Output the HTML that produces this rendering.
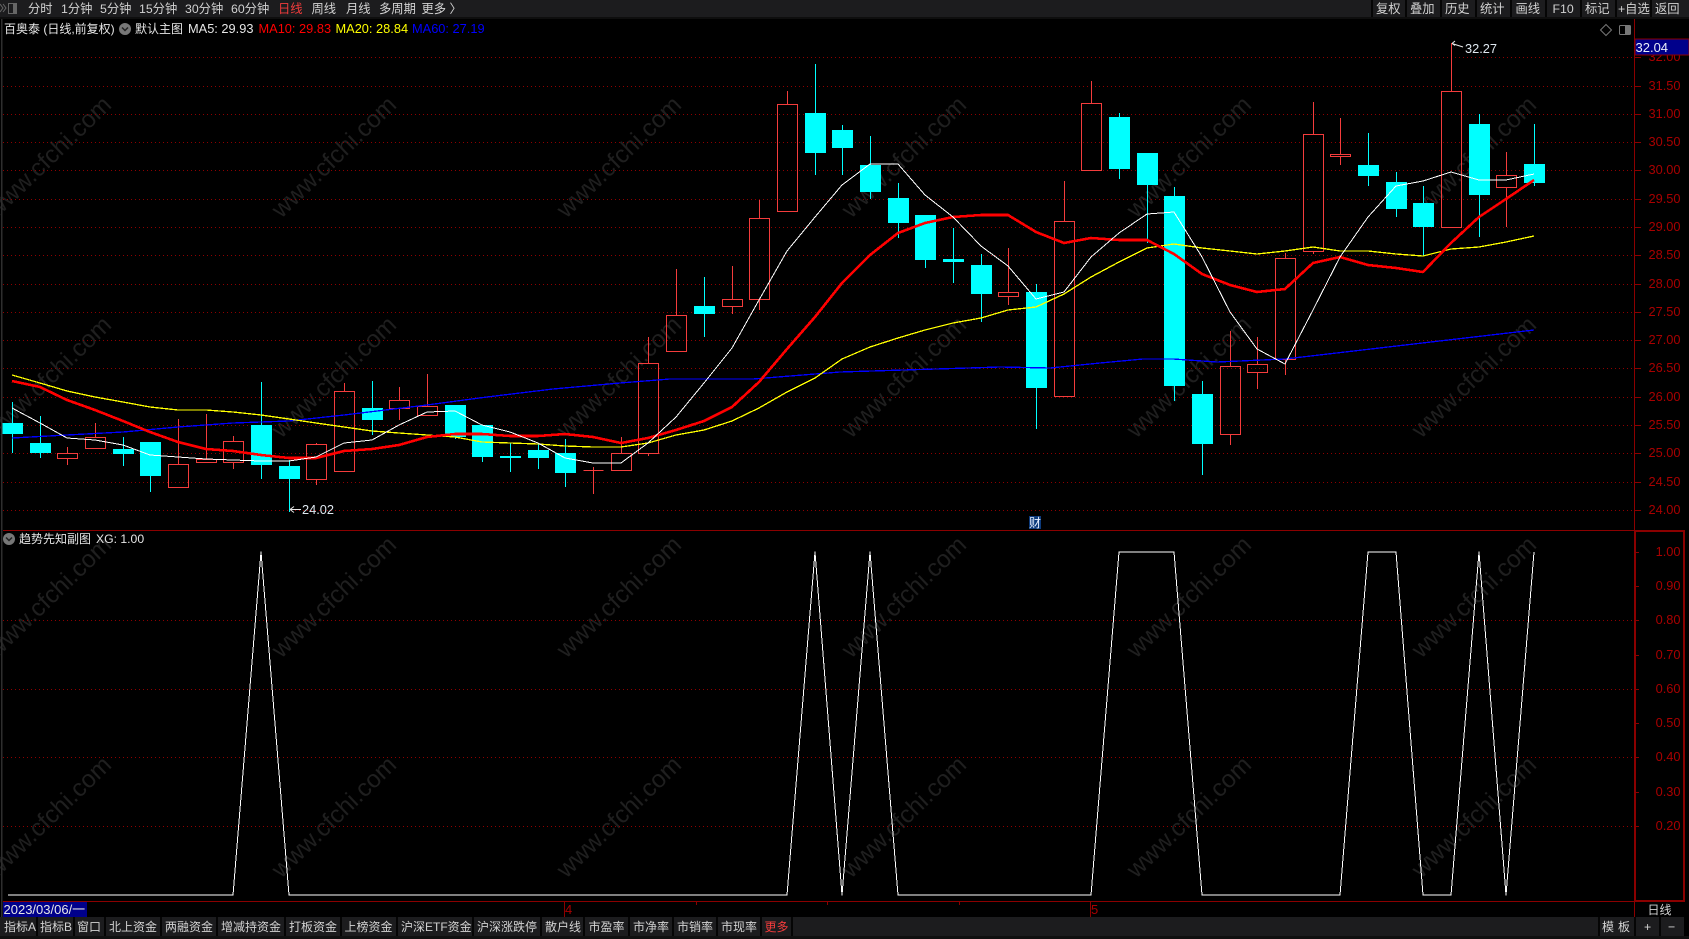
<!DOCTYPE html>
<html lang="zh"><head><meta charset="utf-8"><title>百奥泰</title>
<style>
html,body{margin:0;padding:0;background:#000;width:1689px;height:939px;overflow:hidden}
body{position:relative;font-family:"Liberation Sans","Noto Sans CJK SC",sans-serif;font-size:12.3px;color:#d2d2d2}
svg{position:absolute;left:0;top:0}
.bar{position:absolute;background:#1c1c1e}
.s{position:absolute;background:#050505;width:2px}
.t{position:absolute;white-space:nowrap;line-height:16px;height:16px}
.b{font-size:12px}
.r{color:#f33c3c}
.l{color:#e6e6e6;font-size:12.8px}
</style></head><body>
<svg width="1689" height="939" viewBox="0 0 1689 939" font-family="'Liberation Sans','Noto Sans CJK SC',sans-serif">
<g font-size="24.5" fill="#1f1f1f">
<text transform="translate(49 157) rotate(-44)" text-anchor="middle" dy="8">www.cfchi.com</text>
<text transform="translate(334 157) rotate(-44)" text-anchor="middle" dy="8">www.cfchi.com</text>
<text transform="translate(619 157) rotate(-44)" text-anchor="middle" dy="8">www.cfchi.com</text>
<text transform="translate(904 157) rotate(-44)" text-anchor="middle" dy="8">www.cfchi.com</text>
<text transform="translate(1189 157) rotate(-44)" text-anchor="middle" dy="8">www.cfchi.com</text>
<text transform="translate(1474 157) rotate(-44)" text-anchor="middle" dy="8">www.cfchi.com</text>
<text transform="translate(49 377) rotate(-44)" text-anchor="middle" dy="8">www.cfchi.com</text>
<text transform="translate(334 377) rotate(-44)" text-anchor="middle" dy="8">www.cfchi.com</text>
<text transform="translate(619 377) rotate(-44)" text-anchor="middle" dy="8">www.cfchi.com</text>
<text transform="translate(904 377) rotate(-44)" text-anchor="middle" dy="8">www.cfchi.com</text>
<text transform="translate(1189 377) rotate(-44)" text-anchor="middle" dy="8">www.cfchi.com</text>
<text transform="translate(1474 377) rotate(-44)" text-anchor="middle" dy="8">www.cfchi.com</text>
<text transform="translate(49 597) rotate(-44)" text-anchor="middle" dy="8">www.cfchi.com</text>
<text transform="translate(334 597) rotate(-44)" text-anchor="middle" dy="8">www.cfchi.com</text>
<text transform="translate(619 597) rotate(-44)" text-anchor="middle" dy="8">www.cfchi.com</text>
<text transform="translate(904 597) rotate(-44)" text-anchor="middle" dy="8">www.cfchi.com</text>
<text transform="translate(1189 597) rotate(-44)" text-anchor="middle" dy="8">www.cfchi.com</text>
<text transform="translate(1474 597) rotate(-44)" text-anchor="middle" dy="8">www.cfchi.com</text>
<text transform="translate(49 817) rotate(-44)" text-anchor="middle" dy="8">www.cfchi.com</text>
<text transform="translate(334 817) rotate(-44)" text-anchor="middle" dy="8">www.cfchi.com</text>
<text transform="translate(619 817) rotate(-44)" text-anchor="middle" dy="8">www.cfchi.com</text>
<text transform="translate(904 817) rotate(-44)" text-anchor="middle" dy="8">www.cfchi.com</text>
<text transform="translate(1189 817) rotate(-44)" text-anchor="middle" dy="8">www.cfchi.com</text>
<text transform="translate(1474 817) rotate(-44)" text-anchor="middle" dy="8">www.cfchi.com</text>
</g>
<path shape-rendering="crispEdges" fill="none" stroke="#8f0000" stroke-width="1" stroke-dasharray="1 3" d="M3 57.5H1635M3 86.5H1635M3 114.5H1635M3 142.5H1635M3 170.5H1635M3 199.5H1635M3 227.5H1635M3 255.5H1635M3 284.5H1635M3 312.5H1635M3 340.5H1635M3 368.5H1635M3 397.5H1635M3 425.5H1635M3 453.5H1635M3 482.5H1635M3 510.5H1635M3 620.5H1635M3 689.5H1635M3 757.5H1635M3 826.5H1635"/>
<path shape-rendering="crispEdges" fill="#00ffff" d="
M12 402h1v51h-1zM2 423h21v11H2z
M40 416h1v42h-1zM30 443h21v10H30z
M123 437h1v29h-1zM113 449h21v5h-21z
M150 442h1v50h-1zM140 442h21v34h-21z
M261 382h1v97h-1zM251 425h21v40h-21z
M289 460h1v52h-1zM279 466h21v13h-21z
M372 381h1v54h-1zM362 408h21v12h-21z
M455 405h1v34h-1zM445 405h21v32h-21z
M482 425h1v37h-1zM472 425h21v32h-21z
M510 443h1v29h-1zM500 456h21v2h-21z
M538 443h1v26h-1zM528 450h21v8h-21z
M565 439h1v48h-1zM555 453h21v20h-21z
M704 277h1v60h-1zM694 306h21v8h-21z
M815 64h1v111h-1zM805 113h21v40h-21z
M842 125h1v50h-1zM832 130h21v18h-21z
M870 136h1v63h-1zM860 165h21v27h-21z
M898 183h1v55h-1zM888 198h21v25h-21z
M925 215h1v53h-1zM915 215h21v45h-21z
M953 228h1v55h-1zM943 259h21v3h-21z
M981 254h1v68h-1zM971 265h21v29h-21z
M1036 284h1v145h-1zM1026 292h21v96h-21z
M1119 113h1v66h-1zM1109 117h21v52h-21z
M1147 153h1v90h-1zM1137 153h21v32h-21z
M1174 187h1v214h-1zM1164 196h21v190h-21z
M1202 381h1v94h-1zM1192 394h21v50h-21z
M1368 133h1v53h-1zM1358 165h21v11h-21z
M1396 172h1v45h-1zM1386 182h21v27h-21z
M1423 186h1v70h-1zM1413 203h21v24h-21z
M1479 114h1v123h-1zM1469 124h21v71h-21z
M1534 124h1v62h-1zM1524 164h21v19h-21z"/>
<path shape-rendering="crispEdges" fill="none" stroke="#f43c3c" stroke-width="1" d="
M67.5 447V453M67.5 459V465M57.5 453.5h20v5h-20z
M95.5 423V437M85.5 437.5h20v11h-20z
M178.5 419V464M168.5 464.5h20v23h-20z
M206.5 414V459M196.5 459.5h20v3h-20z
M233.5 436V441M233.5 463V469M223.5 441.5h20v21h-20z
M316.5 443V444M316.5 480V485M306.5 444.5h20v35h-20z
M344.5 383V391M334.5 391.5h20v80h-20z
M399.5 387V400M399.5 409V420M389.5 400.5h20v8h-20z
M427.5 374V406M417.5 406.5h20v9h-20z
M593.5 467V494M583.5 470.5h20
M621.5 437V453M611.5 453.5h20v17h-20z
M648.5 337V363M648.5 454V456M638.5 363.5h20v90h-20z
M676.5 269V315M666.5 315.5h20v36h-20z
M732.5 266V299M732.5 307V314M722.5 299.5h20v7h-20z
M759.5 200V218M759.5 300V310M749.5 218.5h20v81h-20z
M787.5 91V104M777.5 104.5h20v107h-20z
M1008.5 248V292M1008.5 297V305M998.5 292.5h20v4h-20z
M1064.5 181V221M1054.5 221.5h20v175h-20z
M1091.5 81V103M1081.5 103.5h20v67h-20z
M1230.5 331V366M1230.5 435V445M1220.5 366.5h20v68h-20z
M1257.5 337V364M1257.5 373V389M1247.5 364.5h20v8h-20z
M1285.5 253V258M1285.5 360V375M1275.5 258.5h20v101h-20z
M1313.5 102V134M1313.5 252V254M1303.5 134.5h20v117h-20z
M1340.5 118V154M1340.5 157V165M1330.5 154.5h20v2h-20z
M1451.5 43V91M1441.5 91.5h20v136h-20z
M1506.5 152V175M1506.5 188V227M1496.5 175.5h20v12h-20z"/>
<g fill="none" shape-rendering="crispEdges" stroke-linejoin="round">
<polyline stroke="#0000ff" stroke-width="1.3" points="12,438 67,435 123,432 178,427 233,423 289,421 344,415 427,405 487,397 553,389 620,383 670,379 753,379 840,372 1000,367 1050,368 1100,363 1143,359 1173,359 1217,362 1285,359 1534,330"/>
<polyline stroke="#ffff00" stroke-width="1.3" points="12,375 40,383 67,391 95,397 123,402 150,407 178,410 206,410 233,412 261,415 289,419 316,423 344,427 372,431 399,433 427,435 455,437 482,442 510,443 538,444 565,446 593,447 621,447 648,443 676,435 704,430 732,421 759,408 787,392 815,378 842,359 870,347 898,338 925,330 953,323 981,318 1008,310 1036,307 1064,294 1091,277 1119,262 1147,248 1174,244 1202,248 1230,251 1257,254 1285,251 1313,247 1340,251 1368,251 1396,254 1423,256 1451,249 1479,247 1506,242 1534,236"/>
<polyline stroke="#ff0000" stroke-width="2.6" points="12,381 40,387 67,400 95,410 123,421 150,432 178,442 206,449 233,451 261,455 289,458 316,458 344,451 372,449 399,445 427,437 455,434 482,434 510,436 538,436 565,434 593,437 621,443 648,438 676,430 704,421 732,407 759,382 787,349 815,317 842,283 870,255 898,233 925,223 953,217 981,215 1008,215 1036,232 1064,243 1091,238 1119,240 1147,240 1174,254 1202,274 1230,285 1257,292 1285,289 1313,263 1340,257 1368,265 1396,268 1423,272 1451,243 1479,217 1506,199 1534,180"/>
<polyline stroke="#ffffff" stroke-width="1" points="12,408 40,423 67,438 95,440 123,445 150,455 178,457 206,459 233,460 261,461 289,461 316,457 344,443 372,440 399,425 427,412 455,411 482,425 510,432 538,443 565,458 593,463 621,463 648,443 676,417 704,383 732,348 759,300 787,251 815,217 842,185 870,164 898,164 925,195 953,217 981,246 1008,266 1036,299 1064,292 1091,257 1119,233 1147,214 1174,212 1202,257 1230,312 1257,349 1285,364 1313,310 1340,257 1368,217 1396,186 1423,181 1451,172 1479,180 1506,180 1534,174"/>
<polyline stroke="#ffffff" stroke-width="1" points="8,895 233,895 261,552 289,895 787,895 815,552 842,895 870,552 898,895 1091,895 1119,552 1174,552 1202,895 1340,895 1368,552 1396,552 1423,895 1451,895 1479,552 1506,895 1534,552"/>
</g>
<path fill="none" stroke="#e8e8e8" stroke-width="1" d="M1452 43.5l3-2.500M1452 43.5l3 2M1452 43.5l11 3.500M290 509.5h11M290 509.5l4-3M290 509.5l4 3"/>
<text x="1465" y="53" font-size="12.800" fill="#dfe8f0">32.27</text>
<text x="302" y="514" font-size="12.800" fill="#dfe8f0">24.02</text>
<rect x="1029" y="516" width="12" height="13" fill="#0c3a7c"/>
<text x="1029" y="527" font-size="12" fill="#e8f0ff">财</text>
<g shape-rendering="crispEdges" fill="none" stroke="#8b0000">
<path d="M1634.500 18V917M3 530.500H1635M3 901.500H1635M564.500 901V917M1090.500 901V917M827.500 901v4M959.500 901v4M696.500 901v4"/>
<path d="M1635 57.500h6M1635 86.500h6M1635 114.500h6M1635 142.500h6M1635 170.500h6M1635 199.500h6M1635 227.500h6M1635 255.500h6M1635 284.500h6M1635 312.500h6M1635 340.500h6M1635 368.500h6M1635 397.500h6M1635 425.500h6M1635 453.500h6M1635 482.500h6M1635 510.500h6"/>
<path d="M1635 552.500h4M1635 586.500h4M1635 620.500h4M1635 655.500h4M1635 689.500h4M1635 723.500h4M1635 757.500h4M1635 792.500h4M1635 826.500h4"/>
<rect x="1635" y="531" width="49" height="370" stroke-width="2"/>
</g>
<g font-size="12.800" fill="#a80000" text-anchor="end">
<text x="1680.500" y="61">32.00</text><text x="1680.500" y="90">31.50</text><text x="1680.500" y="118">31.00</text><text x="1680.500" y="146">30.50</text><text x="1680.500" y="174">30.00</text><text x="1680.500" y="203">29.50</text><text x="1680.500" y="231">29.00</text><text x="1680.500" y="259">28.50</text><text x="1680.500" y="288">28.00</text><text x="1680.500" y="316">27.50</text><text x="1680.500" y="344">27.00</text><text x="1680.500" y="372">26.50</text><text x="1680.500" y="401">26.00</text><text x="1680.500" y="429">25.50</text><text x="1680.500" y="457">25.00</text><text x="1680.500" y="486">24.50</text><text x="1680.500" y="514">24.00</text>
<text x="1680.500" y="556">1.00</text><text x="1680.500" y="590">0.90</text><text x="1680.500" y="624">0.80</text><text x="1680.500" y="659">0.70</text><text x="1680.500" y="693">0.60</text><text x="1680.500" y="727">0.50</text><text x="1680.500" y="761">0.40</text><text x="1680.500" y="796">0.30</text><text x="1680.500" y="830">0.20</text>
</g>
<rect x="1635" y="39" width="54" height="16" fill="#00008b" stroke="#8b0000" stroke-width="1" shape-rendering="crispEdges"/>
<text x="1635.500" y="52" font-size="13" fill="#e8eef8">32.04</text>
<path d="M1606 24.500l5.500 5.500-5.500 5.500-5.500-5.500z" fill="none" stroke="#777" stroke-width="1"/>
<rect x="1619.500" y="25.500" width="11" height="9" rx="1" fill="none" stroke="#777" stroke-width="1"/>
<rect x="1625" y="26" width="5" height="8" fill="#777"/>
<rect x="1" y="18" width="1.500" height="919" fill="#2e2e2e"/>
<text x="565" y="914" font-size="13" fill="#a80000">4</text>
<text x="1091" y="914" font-size="13" fill="#a80000">5</text>
</svg>

<div class="bar" style="left:0;top:0;width:1689px;height:17px"></div>
<div class="bar" style="left:0;top:917px;width:1684px;height:19px"></div>
<div style="position:absolute;left:0;top:17px;width:1689px;height:2px;background:#0e0e0e"></div>
<div style="position:absolute;left:0;top:936px;width:1689px;height:3px;background:#101010"></div>

<svg width="18" height="16" style="left:0;top:1px"><path d="M0 3l3 4-3 4M3 3l3 4-3 4" fill="none" stroke="#666" stroke-width="1"/><rect x="8.500" y="2.500" width="8" height="10" fill="none" stroke="#666"/><rect x="13" y="3" width="3" height="9" fill="#666"/></svg>

<i class="s" style="left:1371px;top:0;height:17px"></i><i class="s" style="left:1405px;top:0;height:17px"></i><i class="s" style="left:1440px;top:0;height:17px"></i><i class="s" style="left:1475px;top:0;height:17px"></i><i class="s" style="left:1510px;top:0;height:17px"></i><i class="s" style="left:1545px;top:0;height:17px"></i><i class="s" style="left:1580px;top:0;height:17px"></i><i class="s" style="left:1615px;top:0;height:17px"></i><i class="s" style="left:1650px;top:0;height:17px"></i>

<span class="t" style="left:28px;top:1px">分时</span>
<span class="t" style="left:61px;top:1px">1分钟</span>
<span class="t" style="left:100px;top:1px">5分钟</span>
<span class="t" style="left:139px;top:1px">15分钟</span>
<span class="t" style="left:185px;top:1px">30分钟</span>
<span class="t" style="left:231px;top:1px">60分钟</span>
<span class="t r" style="left:278px;top:1px">日线</span>
<span class="t" style="left:311.500px;top:1px">周线</span>
<span class="t" style="left:346px;top:1px">月线</span>
<span class="t" style="left:379px;top:1px">多周期</span>
<span class="t" style="left:421.500px;top:1px">更多 〉</span>

<span class="t" style="left:1376px;top:1px">复权</span>
<span class="t" style="left:1410px;top:1px">叠加</span>
<span class="t" style="left:1445px;top:1px">历史</span>
<span class="t" style="left:1480px;top:1px">统计</span>
<span class="t" style="left:1515.500px;top:1px">画线</span>
<span class="t" style="left:1552.500px;top:1px">F10</span>
<span class="t" style="left:1585px;top:1px">标记</span>
<span class="t" style="left:1618px;top:1px">+自选</span>
<span class="t" style="left:1655px;top:1px">返回</span>

<span class="t l" style="left:4px;top:21px;font-size:12px">百奥泰 (日线,前复权)</span>
<svg width="14" height="14" style="left:118px;top:22px"><circle cx="7" cy="7" r="6" fill="#777"/><path d="M4 5.500l3 3 3-3" fill="none" stroke="#222" stroke-width="1.500"/></svg>
<span class="t l" style="left:135px;top:21px;font-size:12px">默认主图</span>
<span class="t l" style="left:188px;top:21px">MA5: 29.93</span>
<span class="t l" style="left:258.500px;top:21px;color:#ff0000">MA10: 29.83</span>
<span class="t l" style="left:335.500px;top:21px;color:#ffff00">MA20: 28.84</span>
<span class="t l" style="left:412px;top:21px;color:#0000ff">MA60: 27.19</span>

<svg width="14" height="14" style="left:2px;top:532px"><circle cx="7" cy="7" r="6" fill="#777"/><path d="M4 5.500l3 3 3-3" fill="none" stroke="#222" stroke-width="1.500"/></svg>
<span class="t l" style="left:19px;top:531px;font-size:12px">趋势先知副图</span>
<span class="t l" style="left:96px;top:531px;font-size:12.200px">XG: 1.00</span>

<div style="position:absolute;left:3px;top:902px;width:84px;height:15px;background:#00008b"></div>
<span class="t l" style="left:3.500px;top:901.500px;font-size:13px">2023/03/06/一</span>
<span class="t" style="left:1647.500px;top:901.500px;font-size:12px">日线</span>

<i class="s" style="left:36px;top:917px;height:19px"></i><i class="s" style="left:73px;top:917px;height:19px"></i><i class="s" style="left:104px;top:917px;height:19px"></i><i class="s" style="left:160px;top:917px;height:19px"></i><i class="s" style="left:216px;top:917px;height:19px"></i><i class="s" style="left:284px;top:917px;height:19px"></i><i class="s" style="left:340px;top:917px;height:19px"></i><i class="s" style="left:396px;top:917px;height:19px"></i><i class="s" style="left:472px;top:917px;height:19px"></i><i class="s" style="left:540px;top:917px;height:19px"></i><i class="s" style="left:583px;top:917px;height:19px"></i><i class="s" style="left:628px;top:917px;height:19px"></i><i class="s" style="left:672px;top:917px;height:19px"></i><i class="s" style="left:716px;top:917px;height:19px"></i><i class="s" style="left:760px;top:917px;height:19px"></i><i class="s" style="left:791px;top:917px;height:19px"></i><i class="s" style="left:1598px;top:917px;height:19px"></i><i class="s" style="left:1634px;top:917px;height:19px"></i><i class="s" style="left:1659px;top:917px;height:19px"></i>

<span class="t b" style="left:4px;top:919px">指标A</span>
<span class="t b" style="left:40px;top:919px">指标B</span>
<span class="t b" style="left:77px;top:919px">窗口</span>
<span class="t b" style="left:109px;top:919px">北上资金</span>
<span class="t b" style="left:165px;top:919px">两融资金</span>
<span class="t b" style="left:221px;top:919px">增减持资金</span>
<span class="t b" style="left:289px;top:919px">打板资金</span>
<span class="t b" style="left:344.500px;top:919px">上榜资金</span>
<span class="t b" style="left:401px;top:919px">沪深ETF资金</span>
<span class="t b" style="left:477px;top:919px">沪深涨跌停</span>
<span class="t b" style="left:545px;top:919px">散户线</span>
<span class="t b" style="left:588.500px;top:919px">市盈率</span>
<span class="t b" style="left:633px;top:919px">市净率</span>
<span class="t b" style="left:677px;top:919px">市销率</span>
<span class="t b" style="left:721px;top:919px">市现率</span>
<span class="t b r" style="left:764.500px;top:919px">更多</span>
<span class="t b" style="left:1602px;top:919px;letter-spacing:4px">模板</span>
<span class="t" style="left:1644px;top:919px">+</span>
<span class="t" style="left:1668px;top:919px">−</span>
</body></html>
